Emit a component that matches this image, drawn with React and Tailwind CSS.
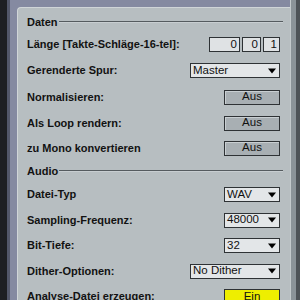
import React from "react";

const font = { fontFamily: '"Liberation Sans", Arial, sans-serif' };

function Tri() {
  return (
    <svg width="8" height="6" viewBox="0 0 8 6" className="shrink-0">
      <path d="M0 0.5 L8 0.5 L4 5.5 Z" fill="#000" />
    </svg>
  );
}

function Drop({ w, text }) {
  return (
    <div
      className={`${w} h-[15px] bg-[#e3e6e8] border border-[#2e3235] flex items-center justify-between pl-[2px] pr-[3px] text-[11.5px] leading-none text-[#111]`}
    >
      <span>{text}</span>
      <Tri />
    </div>
  );
}

function Toggle({ text, on }) {
  return (
    <div
      className={`w-[56px] h-[15px] border border-[#2e3235] flex items-center justify-center text-[11.5px] leading-none text-[#111] ${
        on ? "bg-[#eeee00]" : "bg-[#a8afb3] shadow-[inset_1px_1px_0_#c9cfd2]"
      }`}
    >
      {text}
    </div>
  );
}

function Box({ w, v }) {
  return (
    <div
      className={`${w} h-[15px] bg-[#dfe2e4] border border-[#2e3235] flex items-center justify-end pr-[2px] text-[11.5px] leading-none text-[#111]`}
    >
      {v}
    </div>
  );
}

function Row({ h, label, children }) {
  return (
    <div className={`${h} flex items-center justify-between`}>
      <span className="font-bold text-[11px] text-[#121212] whitespace-nowrap">{label}</span>
      {children}
    </div>
  );
}

function Header({ h, label }) {
  return (
    <div className={`${h} flex items-center`}>
      <span className="font-bold text-[11px] text-[#121212]">{label}</span>
      <div className="flex-1 ml-[1px] mr-[-3px] flex flex-col">
        <div className="h-[1px] bg-[#555b5f]" />
        <div className="h-[1px] bg-[#c8ced1]" />
      </div>
    </div>
  );
}

export default function App() {
  return (
    <div className="w-[300px] h-[300px] overflow-hidden flex bg-[#858aa1]" style={font}>
      <div className="w-[7px] bg-[#1d1f22]" />
      <div className="w-[3px] bg-[#525769]" />
      <div className="flex-1 pt-[7px] pl-[7px] flex">
        <div className="flex-1 bg-[#b7bec1] rounded-tl-[4px] border-t border-l border-[#d0d5d8] pl-[9px] pr-[10px] pt-[4px]">
          <Header h="h-[20px]" label="Daten" />
          <Row h="h-[25px]" label="Länge [Takte-Schläge-16-tel]:">
            <div className="flex gap-[2px]">
              <Box w="w-[31px]" v="0" />
              <Box w="w-[19px]" v="0" />
              <Box w="w-[17px]" v="1" />
            </div>
          </Row>
          <Row h="h-[27px]" label="Gerenderte Spur:">
            <Drop w="w-[90px]" text="Master" />
          </Row>
          <Row h="h-[26px]" label="Normalisieren:">
            <Toggle text="Aus" />
          </Row>
          <Row h="h-[26px]" label="Als Loop rendern:">
            <Toggle text="Aus" />
          </Row>
          <Row h="h-[24px]" label="zu Mono konvertieren">
            <Toggle text="Aus" />
          </Row>
          <Header h="h-[22px]" label="Audio" />
          <Row h="h-[25px]" label="Datei-Typ">
            <Drop w="w-[56px]" text="WAV" />
          </Row>
          <Row h="h-[26px]" label="Sampling-Frequenz:">
            <Drop w="w-[56px]" text="48000" />
          </Row>
          <Row h="h-[25px]" label="Bit-Tiefe:">
            <Drop w="w-[56px]" text="32" />
          </Row>
          <Row h="h-[26px]" label="Dither-Optionen:">
            <Drop w="w-[90px]" text="No Dither" />
          </Row>
          <Row h="h-[25px]" label="Analyse-Datei erzeugen:">
            <Toggle text="Ein" on />
          </Row>
        </div>
      </div>
      <div className="w-[10px] flex">
        <div className="w-[1px] bg-[#c3c9cc]" />
        <div className="w-[5px] bg-[#8b9399]" />
        <div className="w-[4px] bg-[#4e5358]" />
      </div>
    </div>
  );
}
